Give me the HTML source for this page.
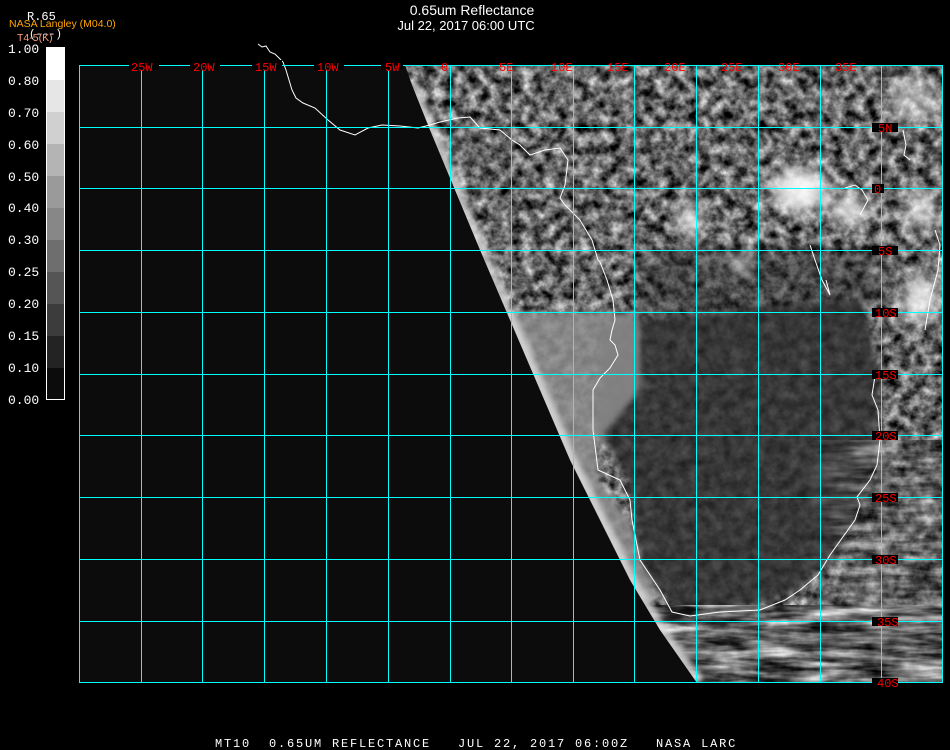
<!DOCTYPE html>
<html><head><meta charset="utf-8">
<style>
html,body{margin:0;padding:0;background:#000;}
body{width:950px;height:750px;position:relative;overflow:hidden;font-family:"Liberation Mono","DejaVu Sans Mono",monospace;}
</style></head>
<body>
<svg width="950" height="750" style="position:absolute;left:0;top:0" xmlns="http://www.w3.org/2000/svg">
<defs>
<clipPath id="data"><polygon points="405,65 943,65 943,683 697,683 660,630 630,580 600,520 570,460 540,390 510,320 480,250 455,190 430,130 412,85"/></clipPath>
<filter id="noise" x="0" y="0" width="100%" height="100%" color-interpolation-filters="sRGB">
<feTurbulence type="fractalNoise" baseFrequency="0.09" numOctaves="4" seed="7"/>
<feColorMatrix type="matrix" values="1.35 0 0 0 -0.28  1.35 0 0 0 -0.28  1.35 0 0 0 -0.28  0 0 0 0 1"/>
</filter>
<filter id="noiseS" x="0" y="0" width="100%" height="100%" color-interpolation-filters="sRGB">
<feTurbulence type="fractalNoise" baseFrequency="0.1" numOctaves="3" seed="11"/>
<feColorMatrix type="matrix" values="0.8 0 0 0 -0.2  0.8 0 0 0 -0.2  0.8 0 0 0 -0.2  0 0 0 0 1"/>
</filter>
<filter id="noise2" x="0" y="0" width="100%" height="100%" color-interpolation-filters="sRGB">
<feTurbulence type="fractalNoise" baseFrequency="0.02 0.12" numOctaves="3" seed="3"/>
<feColorMatrix type="matrix" values="1.8 0 0 0 -0.5  1.8 0 0 0 -0.5  1.8 0 0 0 -0.5  0 0 0 0 1"/>
</filter>
<filter id="blur" x="-50%" y="-50%" width="200%" height="200%" color-interpolation-filters="sRGB"><feGaussianBlur stdDeviation="8"/></filter>
<filter id="blur2" x="-20%" y="-20%" width="140%" height="140%" color-interpolation-filters="sRGB"><feGaussianBlur stdDeviation="3"/></filter>
<filter id="blur3" x="-20%" y="-20%" width="140%" height="140%" color-interpolation-filters="sRGB"><feGaussianBlur stdDeviation="4"/></filter>
<linearGradient id="fadeL" x1="0" x2="1" y1="0" y2="0"><stop offset="0" stop-color="#fff" stop-opacity="0"/><stop offset="0.4" stop-color="#fff" stop-opacity="1"/></linearGradient>
<mask id="m1"><rect x="800" y="440" width="145" height="180" fill="url(#fadeL)"/></mask>
</defs>
<rect x="80" y="65" width="863" height="618" fill="#0c0c0c"/>
<g clip-path="url(#data)">
<rect x="400" y="65" width="545" height="620" filter="url(#noise)"/>
<path d="M600,330 L618,320 L860,300 L880,370 L878,440 L860,510 L830,560 L790,595 L740,610 L680,615 L640,570 L628,480 L596,430 L600,380 Z" fill="#262626" opacity="0.85" filter="url(#blur3)"/>
<rect x="600" y="300" width="280" height="320" filter="url(#noiseS)" opacity="0.2" style="mix-blend-mode:screen"/>
<path d="M505,312 L640,312 L640,390 L615,420 L600,440 L598,480 L630,520 L640,560 L660,600 L620,600 L560,470 Z" fill="#8e8e8e" opacity="0.85" filter="url(#blur2)"/>
<path d="M640,250 L880,250 L880,310 L640,320 Z" fill="#222" opacity="0.45" filter="url(#blur)"/>
<rect x="640" y="605" width="305" height="80" filter="url(#noise2)" opacity="0.8"/>
<g mask="url(#m1)"><rect x="800" y="440" width="145" height="180" filter="url(#noise2)" opacity="0.45"/></g>
<polyline points="412,85 430,130 455,190 480,250 510,320 540,390 570,460 600,520 630,580 660,630 697,683" fill="none" stroke="#e0e0e0" stroke-width="14" opacity="0.8" filter="url(#blur2)"/>
<g fill="#fff" filter="url(#blur)">
<ellipse cx="800" cy="190" rx="30" ry="22" opacity="0.9"/>
<ellipse cx="850" cy="210" rx="18" ry="15" opacity="0.85"/>
<ellipse cx="690" cy="220" rx="12" ry="18" opacity="0.8"/>
<ellipse cx="740" cy="265" rx="12" ry="9" opacity="0.7"/>
<ellipse cx="920" cy="300" rx="18" ry="26" opacity="0.8"/>
<ellipse cx="915" cy="100" rx="25" ry="25" opacity="0.5"/>
<ellipse cx="920" cy="210" rx="18" ry="22" opacity="0.6"/>
</g>
</g>
<polyline fill="none" stroke="#fff" stroke-width="1" points="258,44 262,47 266,46 270,52 275,54 279,58 283,62 286,70 289,80 292,90 296,98 303,103 315,108 328,120 340,130 355,135 368,128 382,125 400,126 418,128 430,125 440,122 458,118 470,117 480,128 500,130 512,140 520,145 530,155 545,150 560,148 568,160 565,185 560,198 565,205 580,220 592,240 598,260 600,262 607,280 610,290 613,300 615,320 612,330 610,340 615,345 618,355 610,368 600,378 593,390 593,430 598,470 620,480 630,500 632,520 640,560 660,590 672,612 690,616 720,612 760,610 785,600 800,590 818,575 830,555 855,520 860,505 857,497 870,480 877,465 880,440 878,410 872,395 876,370"/>
<polyline fill="none" stroke="#fff" stroke-width="1" points="903,130 906,145 904,155 910,160"/>
<polyline fill="none" stroke="#fff" stroke-width="1" points="810,245 815,260 822,280 830,295 826,280"/>
<polyline fill="none" stroke="#fff" stroke-width="1" points="845,188 855,185 862,190 868,200 860,215"/>
<polyline fill="none" stroke="#fff" stroke-width="1" points="935,230 940,245 938,270 930,300 925,330"/>
<g stroke="#00ffff" stroke-width="1" shape-rendering="crispEdges">
<line x1="80" y1="65.5" x2="943" y2="65.5"/>
<line x1="80" y1="127.5" x2="943" y2="127.5"/>
<line x1="80" y1="188.5" x2="943" y2="188.5"/>
<line x1="80" y1="250.5" x2="943" y2="250.5"/>
<line x1="80" y1="312.5" x2="943" y2="312.5"/>
<line x1="80" y1="374.5" x2="943" y2="374.5"/>
<line x1="80" y1="435.5" x2="943" y2="435.5"/>
<line x1="80" y1="497.5" x2="943" y2="497.5"/>
<line x1="80" y1="559.5" x2="943" y2="559.5"/>
<line x1="80" y1="621.5" x2="943" y2="621.5"/>
<line x1="80" y1="682.5" x2="943" y2="682.5"/>
<line x1="79.5" y1="65" x2="79.5" y2="683"/>
<line x1="141.5" y1="65" x2="141.5" y2="683"/>
<line x1="202.5" y1="65" x2="202.5" y2="683"/>
<line x1="264.5" y1="65" x2="264.5" y2="683"/>
<line x1="326.5" y1="65" x2="326.5" y2="683"/>
<line x1="388.5" y1="65" x2="388.5" y2="683"/>
<line x1="450.5" y1="65" x2="450.5" y2="683"/>
<line x1="511.5" y1="65" x2="511.5" y2="683"/>
<line x1="573.5" y1="65" x2="573.5" y2="683"/>
<line x1="634.5" y1="65" x2="634.5" y2="683"/>
<line x1="696.5" y1="65" x2="696.5" y2="683"/>
<line x1="758.5" y1="65" x2="758.5" y2="683"/>
<line x1="820.5" y1="65" x2="820.5" y2="683"/>
<line x1="881.5" y1="65" x2="881.5" y2="683"/>
<line x1="942.5" y1="65" x2="942.5" y2="683"/>
</g>
<g font-family="Liberation Mono, monospace" font-size="12" fill="#ff0000">
<g fill="#000"><rect x="129" y="60" width="30" height="10"/><rect x="190" y="60" width="30" height="10"/><rect x="252" y="60" width="30" height="10"/><rect x="314" y="60" width="30" height="10"/><rect x="381" y="60" width="22" height="10"/></g>
<text x="131" y="71">25W</text><text x="193" y="71">20W</text><text x="255" y="71">15W</text><text x="317" y="71">10W</text><text x="385" y="71">5W</text>
<text x="441" y="71">0</text><text x="499" y="71">5E</text><text x="551" y="71">10E</text><text x="607" y="71">15E</text><text x="664" y="71">20E</text><text x="721" y="71">25E</text><text x="778" y="71">30E</text><text x="835" y="71">35E</text>
<g fill="#000"><rect x="872" y="123" width="26" height="9"/><rect x="872" y="184" width="12" height="9"/><rect x="872" y="246" width="26" height="9"/><rect x="872" y="308" width="26" height="9"/><rect x="872" y="370" width="26" height="9"/><rect x="872" y="431" width="26" height="9"/><rect x="872" y="493" width="26" height="9"/><rect x="872" y="555" width="26" height="9"/><rect x="872" y="617" width="26" height="9"/><rect x="872" y="678" width="26" height="9"/></g>
<text x="878" y="132">5N</text><text x="874" y="193">0</text><text x="878" y="255">5S</text><text x="875" y="317">10S</text><text x="875" y="379">15S</text><text x="875" y="440">20S</text><text x="875" y="502">25S</text><text x="875" y="564">30S</text><text x="877" y="626">35S</text><text x="877" y="687">40S</text>
</g>
<g shape-rendering="crispEdges">
<rect x="46" y="47" width="19" height="33" fill="#fff"/>
<rect x="46" y="80" width="19" height="32" fill="#e6e6e6"/>
<rect x="46" y="112" width="19" height="32" fill="#d0d0d0"/>
<rect x="46" y="144" width="19" height="32" fill="#b4b4b4"/>
<rect x="46" y="176" width="19" height="32" fill="#9a9a9a"/>
<rect x="46" y="208" width="19" height="32" fill="#878787"/>
<rect x="46" y="240" width="19" height="32" fill="#6e6e6e"/>
<rect x="46" y="272" width="19" height="32" fill="#555"/>
<rect x="46" y="304" width="19" height="32" fill="#3c3c3c"/>
<rect x="46" y="336" width="19" height="32" fill="#232323"/>
<rect x="46" y="368" width="19" height="32" fill="#0c0c0c"/>
<rect x="46.5" y="47.5" width="18" height="352" fill="none" stroke="#fff"/>
</g>
<g font-family="Liberation Mono, monospace" font-size="13" fill="#fff">
<text x="8" y="53">1.00</text><text x="8" y="85">0.80</text><text x="8" y="117">0.70</text><text x="8" y="149">0.60</text><text x="8" y="181">0.50</text><text x="8" y="212">0.40</text><text x="8" y="244">0.30</text><text x="8" y="276">0.25</text><text x="8" y="308">0.20</text><text x="8" y="340">0.15</text><text x="8" y="372">0.10</text><text x="8" y="404">0.00</text>
</g>
<text x="27" y="20" font-family="Liberation Mono, monospace" font-size="12" fill="#fff">R.65</text>
<text x="29" y="37" font-family="Liberation Mono, monospace" font-size="11" fill="#fff">(---)</text>
<text x="9" y="27" font-family="Liberation Sans, sans-serif" font-size="10.5" fill="#ffa500">NASA Langley (M04.0)</text>
<text x="17" y="41" font-family="Liberation Sans, sans-serif" font-size="10.5" fill="#ff9c7a">T4-5(K)</text>
<text x="472" y="15" text-anchor="middle" font-family="Liberation Sans, sans-serif" font-size="14" fill="#fff">0.65um Reflectance</text>
<text x="466" y="30" text-anchor="middle" font-family="Liberation Sans, sans-serif" font-size="13" fill="#fff">Jul 22, 2017 06:00 UTC</text>
<text x="215" y="747" font-family="Liberation Mono, monospace" font-size="12" letter-spacing="1.8" fill="#fff" style="white-space:pre" xml:space="preserve">MT10  0.65UM REFLECTANCE   JUL 22, 2017 06:00Z   NASA LARC</text>
</svg>
</body></html>
